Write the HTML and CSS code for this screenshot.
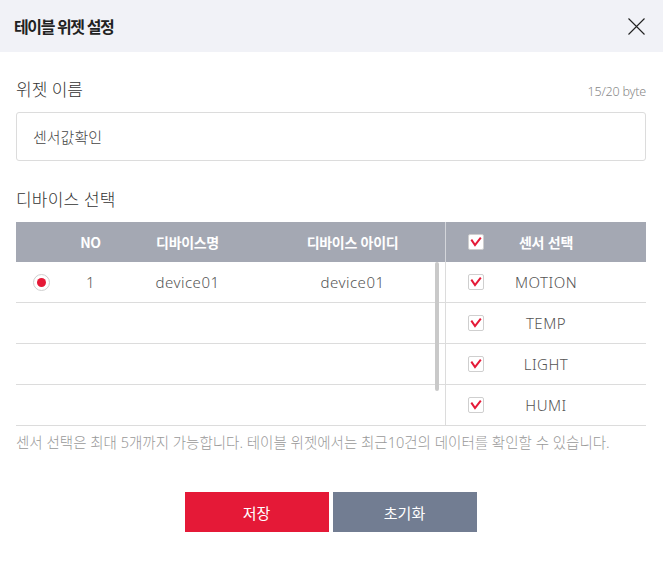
FILE: index.html
```html
<!DOCTYPE html>
<html lang="ko">
<head>
<meta charset="utf-8">
<title>테이블 위젯 설정</title>
<link rel="stylesheet" href="styles.css">
</head>
<body>
<div class="dialog">
  <div class="header">
    <h1 class="title">테이블 위젯 설정</h1>
    <button class="close" aria-label="닫기">
      <svg width="17" height="17" viewBox="0 0 17 17"><path d="M0.5 0.5 L16.5 16.5 M16.5 0.5 L0.5 16.5" stroke="#222" stroke-width="1.1" fill="none"/></svg>
    </button>
  </div>
  <div class="content">
    <div class="label-row">
      <span class="label">위젯 이름</span>
      <span class="counter">15/20 byte</span>
    </div>
    <div class="input">센서값확인</div>

    <div class="label-row section">
      <span class="label wide">디바이스 선택</span>
    </div>

    <div class="table">
      <div class="row head">
        <div class="cell"></div>
        <div class="cell">NO</div>
        <div class="cell">디바이스명</div>
        <div class="cell">디바이스 아이디</div>
        <div class="cell chk"><span class="checkbox"><svg width="12" height="12" viewBox="0 0 12 12"><path d="M1.3 3.6 L5 9 L10.8 1.6" stroke="#e51937" stroke-width="2" fill="none"/></svg></span></div>
        <div class="cell">센서 선택</div>
        <div class="cell"></div>
      </div>
      <div class="body">
        <div class="row">
          <div class="cell"><span class="radio"><span class="dot"></span></span></div>
          <div class="cell">1</div>
          <div class="cell">device01</div>
          <div class="cell">device01</div>
          <div class="cell chk"><span class="checkbox"><svg width="12" height="12" viewBox="0 0 12 12"><path d="M1.3 3.6 L5 9 L10.8 1.6" stroke="#e51937" stroke-width="2" fill="none"/></svg></span></div>
          <div class="cell">MOTION</div>
          <div class="cell"></div>
        </div>
        <div class="row">
          <div class="cell"></div>
          <div class="cell"></div>
          <div class="cell"></div>
          <div class="cell"></div>
          <div class="cell chk"><span class="checkbox"><svg width="12" height="12" viewBox="0 0 12 12"><path d="M1.3 3.6 L5 9 L10.8 1.6" stroke="#e51937" stroke-width="2" fill="none"/></svg></span></div>
          <div class="cell">TEMP</div>
          <div class="cell"></div>
        </div>
        <div class="row">
          <div class="cell"></div>
          <div class="cell"></div>
          <div class="cell"></div>
          <div class="cell"></div>
          <div class="cell chk"><span class="checkbox"><svg width="12" height="12" viewBox="0 0 12 12"><path d="M1.3 3.6 L5 9 L10.8 1.6" stroke="#e51937" stroke-width="2" fill="none"/></svg></span></div>
          <div class="cell">LIGHT</div>
          <div class="cell"></div>
        </div>
        <div class="row">
          <div class="cell"></div>
          <div class="cell"></div>
          <div class="cell"></div>
          <div class="cell"></div>
          <div class="cell chk"><span class="checkbox"><svg width="12" height="12" viewBox="0 0 12 12"><path d="M1.3 3.6 L5 9 L10.8 1.6" stroke="#e51937" stroke-width="2" fill="none"/></svg></span></div>
          <div class="cell">HUMI</div>
          <div class="cell"></div>
        </div>
        <div class="scrollbar"></div>
      </div>
    </div>

    <p class="note">센서 선택은 최대 5개까지 가능합니다. 테이블 위젯에서는 최근10건의 데이터를 확인할 수 있습니다.</p>

    <div class="buttons">
      <button class="btn save">저장</button>
      <button class="btn reset">초기화</button>
    </div>
  </div>
</div>
</body>
</html>
```

FILE: styles.css
```css
* { box-sizing: border-box; }
html, body { margin: 0; padding: 0; background: #fff; }
body {
  font-family: "Noto Sans", "Noto Sans CJK KR", sans-serif;
  color: #333;
}
.dialog { width: 663px; }
.header {
  height: 52px;
  background: #f1f2f7;
  display: flex;
  align-items: center;
  justify-content: space-between;
  padding: 0 18px 0 14px;
}
.title {
  margin: 0;
  font-family: "Noto Sans CJK KR", sans-serif;
  font-size: 16px;
  font-weight: 700;
  color: #222;
  letter-spacing: -1.4px;
}
.close {
  border: 0;
  background: none;
  padding: 0;
  width: 17px;
  height: 17px;
  display: flex;
}
.content { padding: 0 17px 0 16px; }
.label-row {
  margin-top: 26px;
  height: 24px;
  display: flex;
  align-items: baseline;
  justify-content: space-between;
  line-height: 24px;
}
.label-row.section { margin-top: 27px; }
.label { font-size: 17px; font-weight: 300; color: #333; }
.label.wide { letter-spacing: 0.2px; }
.counter { font-size: 12.5px; font-weight: 300; color: #888; letter-spacing: -0.2px; }
.input {
  margin-top: 10px;
  height: 49px;
  border: 1px solid #dcdcdc;
  border-radius: 3px;
  padding-left: 16px;
  display: flex;
  align-items: center;
  font-size: 15px;
  font-weight: 300;
  color: #444;
}
.table { margin-top: 10px; }
.row {
  display: grid;
  grid-template-columns: 50px 49px 145px 185px 50px 102px 1fr;
  height: 41px;
  border-bottom: 1px solid #dcdcdc;
}
.row.head {
  height: 40px;
  border-bottom: 0;
  background: #a4a8b3;
}
.cell {
  display: flex;
  align-items: center;
  justify-content: center;
  font-size: 15px;
  font-weight: 300;
  color: #555;
  letter-spacing: 0.5px;
}
.row.head .cell {
  font-family: "Noto Sans CJK KR", sans-serif;
  color: #fff;
  font-weight: 700;
  font-size: 14px;
  letter-spacing: -0.3px;
}
.cell.chk {
  justify-content: flex-start;
  padding-left: 22px;
  border-left: 1px solid #dcdcdc;
}
.row.head .cell.chk { border-left-color: #d3d5da; }
.checkbox {
  width: 16px;
  height: 16px;
  border: 1px solid #cfcfcf;
  border-radius: 2px;
  background: #fff;
  display: flex;
  align-items: center;
  justify-content: center;
}
.radio {
  width: 17px;
  height: 17px;
  border: 1px solid #cfcfcf;
  border-radius: 50%;
  display: flex;
  align-items: center;
  justify-content: center;
  margin-left: 1px;
}
.dot {
  width: 9px;
  height: 9px;
  border-radius: 50%;
  background: #e51937;
}
.body { position: relative; }
.scrollbar {
  position: absolute;
  left: 419px;
  top: 0;
  width: 4px;
  height: 129px;
  background: #c9c9c9;
  border-radius: 2px;
}
.note {
  margin: 6px 0 0;
  font-size: 14.5px;
  line-height: 20px;
  font-weight: 300;
  color: #999;
  letter-spacing: 0;
}
.buttons {
  margin-top: 40px;
  display: flex;
  justify-content: center;
  gap: 4px;
  padding-right: 1px;
}
.btn {
  width: 144px;
  height: 40px;
  border: 0;
  border-radius: 0;
  color: #fff;
  font-family: "Noto Sans CJK KR", sans-serif;
  font-size: 15px;
  font-weight: 400;
  padding: 0;
}
.btn.save { background: #e51937; }
.btn.reset { background: #727d92; }
```
